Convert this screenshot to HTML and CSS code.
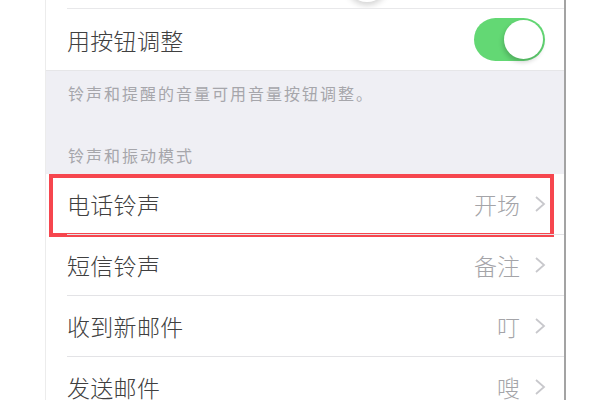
FILE: index.html
```html
<!DOCTYPE html>
<html lang="zh-CN">
<head>
<meta charset="utf-8">
<link rel="stylesheet" href="styles.css">
</head>
<body>
<div class="phone">
  <div class="stub"><div class="knob-shadow"></div></div>
  <div class="group">
    <div class="row">
      <span class="label">用按钮调整</span>
      <span class="toggle"><span class="toggle-knob"></span></span>
    </div>
  </div>
  <div class="gray">
    <p class="note">铃声和提醒的音量可用音量按钮调整。</p>
    <p class="header">铃声和振动模式</p>
  </div>
  <div class="group">
    <div class="row">
      <span class="label">电话铃声</span>
      <span class="value">开场</span>
      <svg class="chev" width="12" height="18" viewBox="0 0 12 18"><polyline points="2,2 10,9 2,16" fill="none" stroke="#c8c8cc" stroke-width="1.8"/></svg>
      <span class="mark"></span>
    </div>
    <div class="row">
      <span class="label">短信铃声</span>
      <span class="value">备注</span>
      <svg class="chev" width="12" height="18" viewBox="0 0 12 18"><polyline points="2,2 10,9 2,16" fill="none" stroke="#c8c8cc" stroke-width="1.8"/></svg>
    </div>
    <div class="row">
      <span class="label">收到新邮件</span>
      <span class="value">叮</span>
      <svg class="chev" width="12" height="18" viewBox="0 0 12 18"><polyline points="2,2 10,9 2,16" fill="none" stroke="#c8c8cc" stroke-width="1.8"/></svg>
    </div>
    <div class="row">
      <span class="label">发送邮件</span>
      <span class="value">嗖</span>
      <svg class="chev" width="12" height="18" viewBox="0 0 12 18"><polyline points="2,2 10,9 2,16" fill="none" stroke="#c8c8cc" stroke-width="1.8"/></svg>
    </div>
  </div>
</div>
</body>
</html>
```

FILE: styles.css
```css
html, body {
  margin: 0;
  padding: 0;
  background: #ffffff;
  overflow: hidden;
}
body {
  width: 600px;
  height: 400px;
  font-family: "Noto Sans CJK SC", "Noto Sans", sans-serif;
}
.phone {
  margin-left: 45px;
  width: 518px;
  height: 400px;
  border-left: 1px solid #ececec;
  border-right: 2px solid #a3a3a3;
  background: #efeff4;
  overflow: hidden;
}
.stub {
  position: relative;
  height: 8px;
  background: #fff;
  overflow: hidden;
}
.knob-shadow {
  position: absolute;
  left: 300px;
  top: -40px;
  width: 42px;
  height: 42px;
  border-radius: 50%;
  background: #fff;
  box-shadow: 0 3px 6px rgba(0,0,0,0.18);
}
.group {
  background: #fff;
  padding-left: 21px;
}
.row {
  position: relative;
  display: flex;
  align-items: center;
  height: 60px;
  padding-right: 18px;
  border-top: 1px solid #e3e3e6;
}
.group .row:first-child {
  border-top: none;
}
.stub + .group .row {
  height: 61px;
  border-top: 1px solid #e8e8ea;
}
.label {
  flex: 1;
  font-size: 23px;
  font-weight: 300;
  color: #404040;
  letter-spacing: 0.3px;
}
.value {
  font-size: 23px;
  font-weight: 300;
  color: #a4a4a8;
  margin-right: 14px;
}
.chev {
  display: block;
}
.toggle {
  position: relative;
  display: block;
  width: 71px;
  height: 43px;
  margin-right: 1px;
  border-radius: 22px;
  background: #63d874;
}
.toggle-knob {
  position: absolute;
  right: 2px;
  top: 2px;
  width: 39px;
  height: 39px;
  border-radius: 50%;
  background: #fff;
  box-shadow: -1px 3px 5px rgba(0,0,0,0.2);
}
.gray {
  display: flex;
  flex-direction: column;
  padding: 11px 21px 8px 22px;
  height: 84px;
  justify-content: space-between;
  border-top: 1px solid #e6e6e8;
}
.note, .header {
  margin: 0;
  font-size: 16px;
  line-height: 22px;
  letter-spacing: 2px;
  color: #a6a6ab;
}
.mark {
  position: absolute;
  left: -18px;
  right: 10px;
  top: 0;
  bottom: -3px;
  border: 4px solid #f6464e;
}
```
